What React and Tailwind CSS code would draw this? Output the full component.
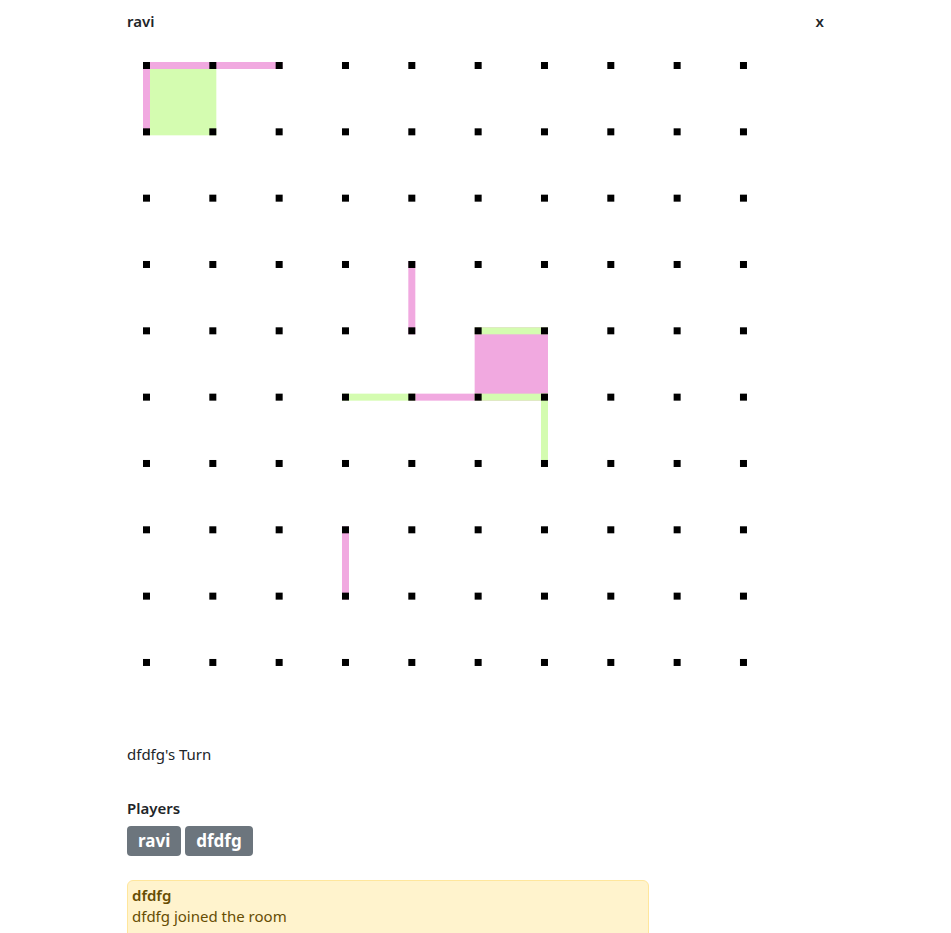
import React from 'react';

const PINK = '#f1a9e0';
const GREEN = '#d4fcb0';
const STEP = 66.33;
const DOT = 7;
const OX = 16;
const OY = 20;

const px = (i) => OX + STEP * i;
const py = (j) => OY + STEP * j;

// lines: [type, col, row, color]  h = to the right, v = downwards
const lines = [
  ['h', 0, 0, PINK],
  ['h', 1, 0, PINK],
  ['v', 0, 0, PINK],
  ['v', 4, 3, PINK],
  ['h', 4, 5, PINK],
  ['v', 3, 7, PINK],
  ['h', 5, 4, GREEN],
  ['h', 3, 5, GREEN],
  ['h', 5, 5, GREEN],
  ['v', 6, 5, GREEN],
];

const boxes = [
  [0, 0, GREEN],
  [5, 4, PINK],
];

const Board = () => (
  <svg width="697" height="690" className="block">
    {boxes.map(([i, j, c]) => (
      <rect key={`b${i}-${j}`} x={px(i)} y={py(j)} width={STEP + DOT} height={STEP + DOT} fill={c} />
    ))}
    {lines.map(([t, i, j, c]) =>
      t === 'h' ? (
        <rect key={`l${t}${i}-${j}`} x={px(i)} y={py(j)} width={STEP + DOT} height={DOT} fill={c} />
      ) : (
        <rect key={`l${t}${i}-${j}`} x={px(i)} y={py(j)} width={DOT} height={STEP + DOT} fill={c} />
      )
    )}
    {[...Array(10)].map((_, j) =>
      [...Array(10)].map((_, i) => (
        <rect key={`d${i}-${j}`} x={px(i)} y={py(j)} width={DOT} height={DOT} fill="#000" />
      ))
    )}
  </svg>
);

const App = () => {
  return (
    <div className="min-h-screen bg-white text-[#212529] font-['Noto_Sans',sans-serif] text-[15px]">
      <div className="mx-auto max-w-[721px] px-3">
        {/* Header */}
        <div className="flex justify-between items-center h-[42px]">
          <span className="font-semibold">ravi</span>
          <span className="font-semibold">x</span>
        </div>

        {/* Board */}
        <Board />

        {/* Turn */}
        <p className="mt-[11px] leading-[22px]">dfdfg's Turn</p>

        {/* Players */}
        <h6 className="mt-8 leading-[22px] font-semibold">Players</h6>
        <div className="flex gap-1 mt-[7px]">
          {['ravi', 'dfdfg'].map((p) => (
            <span
              key={p}
              className="h-[30px] px-[11px] flex items-center rounded-[4px] bg-[#6c757d] text-white font-bold text-[17px]"
            >
              {p}
            </span>
          ))}
        </div>

        {/* Mensajes */}
        <div className="mt-6 w-[522px] rounded-md border border-[#ffe69c] bg-[#fff3cd] text-[#664d03] px-1 pt-1 pb-3">
          <div className="font-semibold leading-[21px]">dfdfg</div>
          <div className="leading-[21px]">dfdfg joined the room</div>
        </div>
      </div>
    </div>
  );
};

export default App;
